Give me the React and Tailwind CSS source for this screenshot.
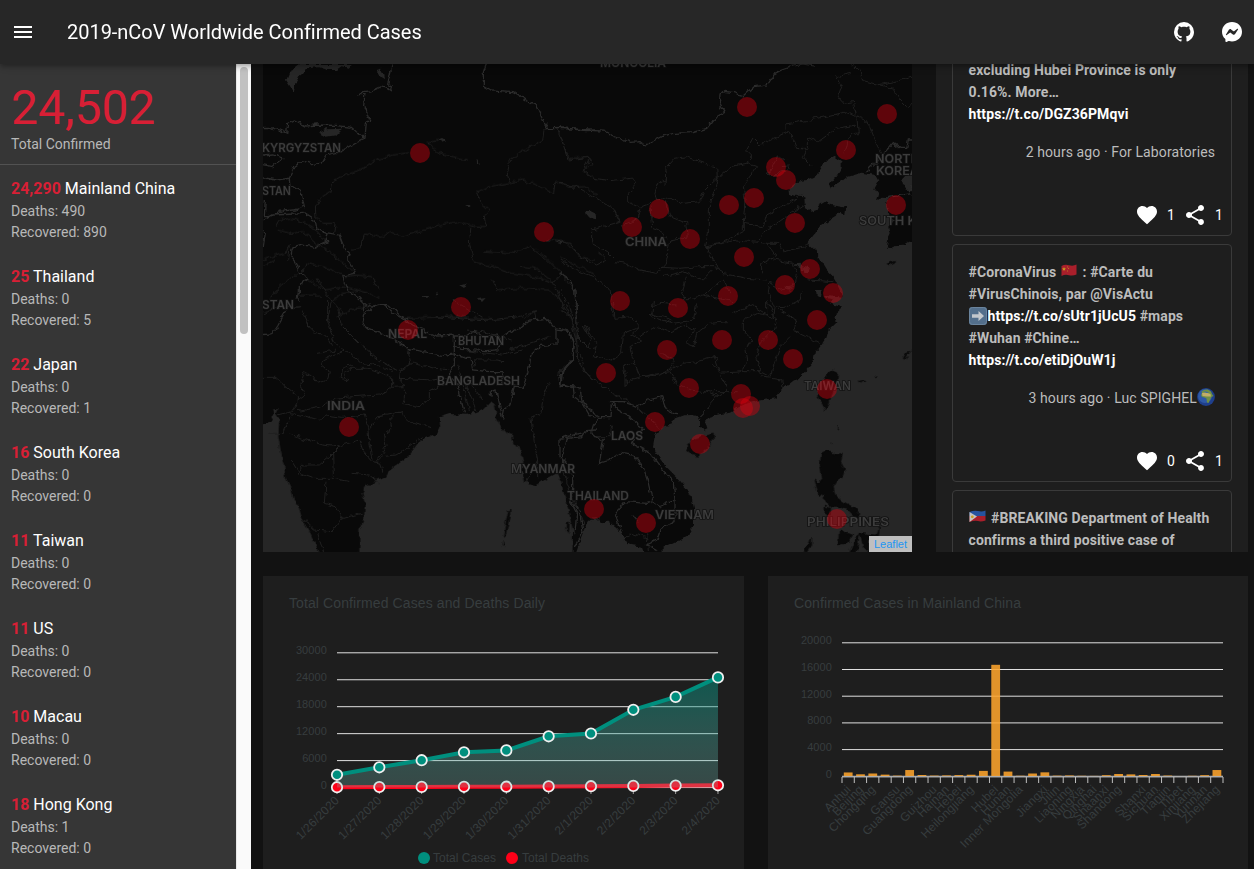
import { MdFavorite, MdMenu, MdShare } from "react-icons/md";

const regions = [
  { count: "24,290", name: "Mainland China", deaths: 490, recovered: 890 },
  { count: "25", name: "Thailand", deaths: 0, recovered: 5 },
  { count: "22", name: "Japan", deaths: 0, recovered: 1 },
  { count: "16", name: "South Korea", deaths: 0, recovered: 0 },
  { count: "11", name: "Taiwan", deaths: 0, recovered: 0 },
  { count: "11", name: "US", deaths: 0, recovered: 0 },
  { count: "10", name: "Macau", deaths: 0, recovered: 0 },
  { count: "18", name: "Hong Kong", deaths: 1, recovered: 0 },
];

const markers = [
  [420, 153], [544, 232], [461, 307], [408, 330], [349, 427], [747, 107], [887, 114], [846, 150],
  [776, 167], [786, 180], [754, 198], [729, 205], [659, 209], [632, 227], [690, 239], [795, 223],
  [896, 205], [744, 257], [810, 269], [785, 285], [833, 293], [728, 296], [678, 308], [620, 301],
  [817, 320], [722, 340], [768, 340], [667, 350], [793, 359], [606, 373], [689, 388], [741, 394],
  [743, 408], [750, 406], [827, 389], [655, 422], [700, 444], [594, 509], [646, 523], [837, 519],
];

// Map labels: text, left, baseline, width
const labels = [
  ["MONGOLIA", 600, 67, 66], ["KYRGYZSTAN", 262, 151.5, 79], ["STAN", 262, 194.5, 29], ["STAN", 262, 309, 32],
  ["CHINA", 625, 246, 42], ["NEPAL", 388, 337.5, 39], ["BHUTAN", 458, 345, 46], ["BANGLADESH", 437, 384.5, 83],
  ["INDIA", 327, 410, 38], ["MYANMAR", 511, 472.5, 64], ["THAILAND", 567, 499.5, 62], ["LAOS", 611, 439.5, 32],
  ["VIETNAM", 655, 518.5, 59], ["TAIWAN", 804, 390, 47], ["PHILIPPINES", 807, 525.5, 82],
  ["NORTH", 875, 163, 45], ["KOREA", 876, 174.5, 43], ["SOUTH KOREA", 859, 224.5, 92],
];

// Every map sheet is drawn at three units per pixel from its own origin.
const sheets = {
  nw: "translate(236 60) scale(.33333)",
  ne: "translate(560 60) scale(.33333)",
  sw: "translate(236 300) scale(.33333)",
  se: "translate(560 300) scale(.33333)",
};

const water = {
  nw: [
    "M150,60 L160,35 175,28 195,12 350,12 340,25 318,18 300,30 275,30 250,22 215,25 200,40 190,48 178,70 173,96 160,75Z",
    "M422,30 L435,26 445,45 447,60 430,50Z",
    "M246,218 L270,208 318,206 300,226 270,230Z",
    "M605,238 L615,234 628,241 612,246Z M1046,452 L1062,454 1080,462 1080,478 1058,470Z M725,293 L728,296 731,320 726,310Z M686,435 L704,435 700,439Z M668,674 L685,670 694,676 684,684Z M726,715 L752,711 738,726Z M557,708 L578,708 570,714Z M596,710 L606,694 603,704Z M474,683 L488,687Z M955,545 L985,545 970,551Z M748,518 L762,520Z",
  ],
  ne: [
    "M75,458 L90,452 112,464 104,476 90,472Z",
    "M1086,1506 L1086,540 1045,545 1030,554 1005,556 998,565 980,566 985,535 992,520 988,500 998,485 985,450 978,430 990,412 965,410 948,425 955,400 944,385 955,365 944,345 905,338 860,352 838,370 810,383 808,376 825,355 845,325 845,305 820,288 803,298 785,320 770,345 740,360 710,366 688,385 690,402 715,410 733,412 735,445 755,455 770,450 775,438 795,425 815,435 858,443 856,465 835,461 805,480 780,498 765,520 742,550 765,570 782,600 800,630 820,650 840,685 845,710 800,705 790,712 820,718 812,730 842,742 840,755 820,772 832,785 805,812 798,838 780,865 765,880 760,905 735,935 715,955 700,962 665,990 645,1015 595,1022 560,1030 530,1045 510,1058 480,1062 450,1070 436,1088 442,1108 432,1112 420,1100 420,1080 414,1068 395,1065 370,1066 345,1075 335,1092 310,1100 285,1125 279,1158 295,1190 320,1222 355,1256 380,1286 395,1315 402,1345 402,1395 385,1425 350,1445 315,1462 300,1476 300,1506Z",
    "M1086,342 L1035,348 1024,360 1026,378 1048,392 1086,398Z",
    "M38,1506 L48,1476 64,1430 74,1405 82,1385 92,1376 118,1375 122,1387 145,1385 165,1400 185,1422 194,1442 215,1455 245,1460 262,1506Z",
    "M768,690 L782,690 780,710 770,705Z M705,610 L722,608 730,630 715,622Z M727,618 L748,624 742,640 730,636Z M676,676 L692,682 684,690Z M213,1364 L225,1370 240,1390 228,1382Z",
    "M0,1300 L8,1330 18,1360 30,1400 36,1445 35,1506 0,1506Z",
  ],
  sw: [
    "M50,380 L81,373 104,362 112,344 108,325 125,325 118,340 130,360 127,408 134,450 145,500 150,535 165,565 172,590 188,620 200,660 222,700 238,735 247,756 258,786 50,786Z",
    "M370,786 L370,690 384,660 386,610 379,580 384,560 395,553 410,554 418,540 450,530 460,512 495,485 520,465 545,430 565,415 600,403 612,385 610,352 640,342 690,344 720,335 745,325 765,303 778,320 782,355 800,385 815,402 828,405 832,430 852,440 862,485 860,515 864,545 885,552 902,556 925,540 962,520 976,545 985,590 1000,640 1010,690 1008,786Z",
  ],
};

const islands = [
  "M820,210 L833,215 832,240 815,285 797,332 782,305 773,285 785,250 800,225Z",
  "M382,435 L395,420 430,408 460,402 460,415 445,440 418,466 392,460 381,450Z",
  "M785,462 L800,454 830,463 847,459 842,485 854,510 845,535 832,542 820,562 825,585 850,605 880,622 900,645 890,655 865,630 838,622 815,622 795,605 790,585 772,580 762,540 775,550 788,535 780,495Z",
  "M795,618 L812,625 810,648 795,640Z M838,690 L878,705 862,730 835,738Z M870,755 L885,715 898,705 890,755Z M905,715 L925,720 925,755 910,740Z M900,655 L925,658 915,668Z M895,700 L950,705 958,680 955,715 910,722Z M730,752 L748,730 755,712 755,735 740,756Z",
  "M1030,175 L1038,160 1053,150 1040,164 1033,178Z M980,-108 L1003,-116 1003,-110 985,-102Z M895,244 L915,240 900,246Z M945,230 L954,227Z",
  "M-156,635 L-150,633 -154,660 -165,710 -170,712Z M-172,725 L-168,738 -174,738Z",
  "M22,670 L28,665 26,700 20,690Z M832,376 L836,388Z M812,430 L820,426Z",
];

// National frontiers
const frontiers = {
  nw: [
    "M472,0 L462,45 455,70 466,78 464,92 450,84 436,80 410,92 380,95 370,104 390,104 386,140 402,182 388,190 384,235",
    "M60,203 L100,202 130,210 152,220 155,190 175,180 210,198 240,195 300,196 345,202 382,232",
    "M384,235 L345,258 315,275 270,285 255,310 230,314 200,302 175,320 160,352 162,375 195,395 205,440 175,450 145,452 100,470 85,470 88,420",
    "M60,495 L110,465 180,462 205,460 235,480 240,505 270,518 310,525 325,565 342,580 335,600 358,640 320,648 325,665 335,690 380,725 405,745 430,732 460,735 490,765 520,780",
    "M270,518 L275,545 240,562 200,555 168,565 165,590 180,610 190,640 215,655 190,675 190,700 185,725",
    "M60,310 L110,320 140,294 110,285 60,290 M60,350 L120,360 160,355",
    "M755,0 L742,40 742,80 765,93 832,98 865,118 900,135 918,175 936,206 1000,205 1050,212 1080,210",
    "M60,490 L88,520 82,560",
  ],
  ne: [
    "M0,204 L80,210 140,214 160,228 210,247 240,245 256,257 310,228 345,220 400,218 440,205 465,175 494,157 478,130 480,105 492,94 520,98 550,107 580,80 622,75 645,40 665,30 700,18 730,12 765,18",
    "M918,335 L945,310 985,265 1000,248 1020,262 1040,262 1045,240 1076,240",
    "M985,412 L1030,405 1050,402 1056,375",
    "M0,640 L30,660 45,695 52,780",
  ],
  sw: [
    "M60,108 L105,105 125,75 150,30 M380,0 L385,20 385,50 380,72 400,88 470,115 515,145 560,155 620,166 655,162 655,105 600,108 530,75 500,55 470,40 440,12 410,18 388,40 378,70",
    "M655,135 L675,148 750,152 785,150 800,120 780,105 740,110 715,90 690,108 655,108",
    "M800,108 L850,85 880,60 930,55 960,90 1000,95 1010,130 1010,180 980,215 975,255 1012,262 1015,290 1040,310 1060,345 1080,352",
    "M960,90 L960,135 910,140 885,165 880,200 862,262 835,258 820,320 805,330 800,355 780,270 760,280 770,292",
    "M655,162 L690,175 705,175 710,210 760,215 805,215 800,250 M655,162 L655,195 640,225 665,250 670,275 685,340",
    "M1080,390 L1050,392 1040,410 990,415 980,460 980,500 1010,530 1010,570 1000,595 1030,635 1040,690 1015,745",
  ],
  se: [
    "M0,85 L30,95 40,130 35,180 5,215 0,262 M0,258 L60,262 65,300 90,330 120,350 150,350 155,305 190,305 230,318 265,300 305,290 320,330 350,345",
    "M95,392 L0,415 0,470 38,510 M95,392 L100,375 125,350 M95,395 L105,412 130,418 118,490 150,480 180,460 220,465 250,505 265,550 278,605 265,610 195,605 165,640 180,690 195,720",
    "M150,305 L175,330 200,345 250,385 240,405 215,430 270,460 300,500 340,550 345,600 345,665 300,690 290,720 260,735 290,752",
    "M278,605 L300,620 345,600 M45,700 L50,640 30,600",
  ],
};

// Provinces and rivers
const provinces = {
  nw: [
    "M240,470 L238,440 250,418 285,395 290,365 330,345 370,330 420,300 470,285 520,278 M590,265 L620,285 660,292 695,300 M590,262 L575,250 605,240",
    "M240,470 L265,490 298,490 292,520 M345,570 L372,565 385,522 440,532 460,515 500,528 560,512 610,495 665,485 720,498 752,500 745,470 762,455 735,430 722,398 760,380 860,360 900,372 953,400 957,365 1000,382 1050,380 1080,405",
    "M820,365 L812,335 818,308 850,280 920,240 924,210 936,206 M965,206 L985,260 1000,295 1060,290 1068,310 1040,335 1080,357",
    "M705,500 L700,545 712,605 770,620 830,640 900,650 950,670 975,640 930,595 880,555 840,580 745,573 M770,660 L785,692 850,685 940,690 975,720 1005,780 M855,618 L900,625 950,665 985,750",
    "M975,640 L1015,690 1025,780 M930,540 L990,545 1030,590 1080,600 M970,590 L1040,625 1080,645",
    "M120,500 L130,480 165,475 200,485 240,510 270,545 M125,510 L165,520 200,515 250,555 300,590 350,635 M60,605 L110,590 150,580 160,550 155,600 M60,625 L120,600",
    "M185,640 L130,680 100,720 M200,640 L210,610 260,620 290,630 330,650 360,645 410,650 430,690 M215,655 L260,690 330,680 400,700 430,715 M190,705 L255,705 M60,765 L110,745 195,740 M240,655 L270,700 320,760 M275,780 L285,730 320,700 370,690 M300,770 L360,745 400,742",
    "M510,775 L640,770 780,780 M860,780 L895,755 900,780",
  ],
  ne: [
    "M0,225 L25,300 90,292 70,330 100,355 150,362 215,355 230,370 205,400 205,425 240,442 270,430 M0,370 L50,380 110,415 160,445 180,485 130,500 95,510 95,550 140,575 165,600 M315,375 L318,325 345,295 380,290 470,322 472,355 450,375 430,395 418,425 370,430 315,410 290,420 285,400 295,370 315,360",
    "M475,350 L460,400 445,450 445,520 437,558 460,600 485,640 560,655 620,660 M475,350 L510,320 560,310 575,285 560,270 580,235 600,255 640,235 690,212 710,265 740,268 730,290 755,320 M675,212 L675,192 740,182 860,155 890,170 895,220 865,235 855,280 M710,265 L745,265 745,230 775,245 830,205 885,195",
    "M560,310 L590,320 550,380 555,420 550,490 550,515 490,545 437,558 M550,490 L610,500 M610,500 L620,465 700,420 730,400 M590,545 L620,510 735,430 M437,560 L530,540 620,550 660,550 670,575 735,560 745,550 M620,550 L650,590 605,610 605,640",
    "M640,315 L625,345 640,350 660,330 680,335 M640,315 L655,285 665,300 682,298 M665,320 L690,318 680,335",
    "M875,12 L900,35 910,65 950,75 1000,65 1076,48 M875,40 L830,50 845,80 835,110 850,130 880,125 890,170 910,175 930,200 945,240 965,280 M960,75 L1000,85 1020,120 1040,140 1076,118",
    "M240,442 L230,480 180,500 M315,420 L330,470 380,490 385,530 330,540 315,610 290,640 240,630 200,610 165,605 M270,440 L275,500 300,510 320,540 M0,545 L30,550 60,590 110,615 140,600 115,575",
    "M305,622 L360,625 420,620 465,620 490,640 M310,650 L370,635 430,660 460,630 M380,650 L365,700 380,720 430,705 520,725 M430,705 L490,660 510,700 M280,740 L300,730 350,735 M270,760 L340,780 M520,760 L580,730 590,745 640,775 M640,600 L700,610 710,640 700,680 650,690 630,660 625,700 645,745 640,780 M730,690 L720,720 680,740 650,745 M745,660 L820,665",
    "M0,600 L45,630 100,650 150,690 160,770 M0,690 L30,740 40,780",
  ],
  sw: [
    "M60,232 L120,232 150,262 185,290 182,310 170,335 125,345 M180,335 L250,322 300,295 350,290 430,285 470,262 470,235 430,215 395,205 340,205 325,220 338,240 315,235 320,205 345,195 M185,300 L205,285 195,250 205,220 230,230 245,250 275,240 280,215 255,195 262,180 300,160 330,150",
    "M275,0 L275,60 295,130 340,160 375,190 440,200 470,215 M305,30 L320,80 370,130 430,180 490,215 530,190 600,205 640,210 M515,145 L525,190 495,205 490,235 510,280 500,310 550,320 580,300 580,275 640,245 M490,235 L590,240 650,230 M470,262 L500,260",
    "M155,340 L195,345 250,360 270,345 320,352 385,345 395,380 400,440 410,480 M160,402 L200,415 260,435 305,440 370,420 380,450 410,485 435,490 440,515 M185,525 L200,495 250,495 280,470 310,440 290,460 292,530 M165,480 L190,520 230,535 290,535 340,545 M350,520 L400,525 430,550",
    "M425,485 L440,470 480,465 520,440 560,410 M420,485 L450,440 445,400 465,385 460,360 480,340 500,335 505,350 M395,390 L430,350 500,335 M505,350 L520,365 590,380 M270,545 L265,610 300,620 320,655 380,640 M200,655 L235,690 290,695 320,655 M245,700 L270,776",
    "M665,190 L680,250 700,330 M690,250 L720,330 M700,245 L740,300 M710,210 L720,180 780,180 805,185 M715,155 L800,165 860,150 M820,150 L940,110 M940,250 L920,300 915,340 885,355 895,430 905,480 870,550 M905,480 L905,540 M1010,180 L970,215 965,245 M985,0 L1020,100 1025,180 1060,230 1080,240 M1020,0 L1025,110 1060,145 1080,140",
    "M60,60 L110,25 200,20 M245,100 L270,105 290,140 M200,30 L220,80 245,105",
    "M600,50 L740,62 850,50 900,35 M690,90 L740,95 830,120 M650,0 L740,52",
    "M100,400 L140,400 150,375 165,350 M240,160 L300,150",
  ],
  se: [
    "M0,30 L30,50 50,130 M45,0 L55,150 80,220 150,275 200,300 240,330 300,385 M70,75 L95,120 80,145 M75,75 L110,130 100,170 155,180 185,160 190,100 240,80 215,50 165,55 160,0 M240,80 L215,105 245,120 210,140 215,165 240,230 300,225 325,210 370,190 410,185 465,170 480,215 M195,215 L195,260 210,240 245,230 M280,0 L275,50 340,70 400,60 410,10 M240,110 L280,80 330,95 380,75 405,90 380,130 405,140",
    "M400,140 L410,100 450,70 500,65 M550,60 L590,40 620,45 620,0 M550,60 L550,90 575,120 555,150 560,180 545,215 480,220 500,260 495,275 470,290 M660,30 L710,60 700,90 740,110 780,130 M620,0 L650,60 640,90 600,130 590,170 600,215 545,215 M600,215 L630,230 660,140 690,110 M600,230 L665,240 670,270",
    "M240,230 L330,215 350,250 390,270 430,275 475,285 440,325 420,345 M325,210 L345,180 300,160 M430,275 L530,275 M105,410 L150,410 155,380 M200,250 L190,200 225,190 M480,215 L460,190",
    "M5,500 L40,600 60,640 75,680 M190,720 L215,700 265,715 M260,700 L265,750",
  ],
};

function WorldMap() {
  return (
    <svg className="block h-[488px] w-[649px] overflow-hidden" viewBox="263 64 649 488">
      <defs>
        <filter id="rough" filterUnits="userSpaceOnUse" x="253" y="54" width="669" height="508" colorInterpolationFilters="sRGB">
          <feTurbulence type="fractalNoise" baseFrequency="0.16" numOctaves="2" seed="4" />
          <feDisplacementMap in="SourceGraphic" scale="6" xChannelSelector="R" yChannelSelector="G" />
        </filter>
      </defs>
      <rect x="263" y="64" width="649" height="488" fill="#090909" />
      <g filter="url(#rough)">
        {Object.keys(water).map((k) => (
          <path key={k} transform={sheets[k]} d={water[k].join(" ")} fill="#262626" />
        ))}
        <path transform={sheets.se} d={islands.join(" ")} fill="#090909" stroke="#090909" strokeWidth="2" />
        {Object.keys(provinces).map((k) => (
          <path key={k} transform={sheets[k]} d={provinces[k].join(" ")} fill="none" stroke="#202020" strokeWidth="3" />
        ))}
        {Object.keys(frontiers).map((k) => (
          <path key={k} transform={sheets[k]} d={frontiers[k].join(" ")} fill="none" stroke="#2c2c2c" strokeWidth="3.8" />
        ))}
      </g>
      <g className="font-['Inter',sans-serif] text-[12px] font-semibold" fill="#3c3c3c" stroke="#121212" strokeWidth="1.5" paintOrder="stroke">
        {labels.map(([text, x, y, w]) => (
          <text key={text + x + y} x={x} y={y} textLength={w} lengthAdjust="spacingAndGlyphs">{text}</text>
        ))}
      </g>
      {markers.map(([x, y]) => (
        <circle key={`${x}-${y}`} cx={x} cy={y} r="10" fill="#e20010" fillOpacity="0.4" />
      ))}
    </svg>
  );
}

const days = ["1/26/2020", "1/27/2020", "1/28/2020", "1/29/2020", "1/30/2020", "1/31/2020", "2/1/2020", "2/2/2020", "2/3/2020", "2/4/2020"];
const caseY = [774.8, 767.3, 760.2, 752.3, 750.4, 736.3, 733.5, 709.8, 696.9, 677.4];
const deathY = [787.2, 787, 786.9, 786.8, 786.7, 786.4, 786.2, 785.9, 785.6, 785.3];
const dayX = days.map((_, i) => 337 + i * 42.33);

function DailyChart() {
  const points = dayX.map((x, i) => `${x},${caseY[i]}`).join(" ");
  const deathPoints = dayX.map((x, i) => `${x},${deathY[i]}`).join(" ");
  return (
    <svg className="block h-[293px] w-[481px] font-['Liberation_Sans',sans-serif]" viewBox="263 576 481 293" fill="#373d3f">
      <defs>
        <linearGradient id="area" x1="0" y1="677" x2="0" y2="788" gradientUnits="userSpaceOnUse">
          <stop offset="0" stopColor="#008f7e" stopOpacity=".5" />
          <stop offset="1" stopColor="#80c7be" stopOpacity=".25" />
        </linearGradient>
      </defs>
      <text x="289" y="608" fontSize="14" textLength="256">Total Confirmed Cases and Deaths Daily</text>
      {[30000, 24000, 18000, 12000, 6000, 0].map((v, i) => (
        <g key={v}>
          <text x="327" y={654 + i * 27} fontSize="11" textAnchor="end" letterSpacing=".1">{v}</text>
          <path d={`M337,${652.8 + i * 26.95}H718`} stroke="#e0e0e0" strokeWidth="1" />
        </g>
      ))}
      {dayX.map((x, i) => (
        <g key={days[i]}>
          <path d={`M${x},788v6`} stroke="#a0a0a0" />
          <text transform={`translate(${x + 3} 801) rotate(-45)`} fontSize="12" textAnchor="end" letterSpacing=".25">{days[i]}</text>
        </g>
      ))}
      <polyline points={deathPoints} fill="none" stroke="#ff0018" strokeWidth="4" />
      {dayX.map((x, i) => (
        <circle key={x} cx={x} cy={deathY[i]} r="5.2" fill="#ff0018" stroke="#f0f0f0" strokeWidth="1.8" />
      ))}
      <polygon points={`337,787.5 ${points} 718,787.5`} fill="url(#area)" />
      <polyline points={points} fill="none" stroke="#008f7e" strokeWidth="4" />
      {dayX.map((x, i) => (
        <circle key={x} cx={x} cy={caseY[i]} r="5.2" fill="#008f7e" stroke="#f0f0f0" strokeWidth="1.8" />
      ))}
      <circle cx="424" cy="858" r="6" fill="#008f7e" />
      <text x="433" y="862" fontSize="12" textLength="63">Total Cases</text>
      <circle cx="512" cy="858" r="6" fill="#ff0018" />
      <text x="522" y="862" fontSize="12" textLength="67">Total Deaths</text>
    </svg>
  );
}

const provinceBars = [
  ["Anhui", 530], ["Beijing", 253], ["Chongqing", 376], ["", 205], ["Gansu", 57], ["Guangdong", 895], ["", 150],
  ["Guizhou", 64], ["Hainan", 89], ["Hebei", 135], ["Heilongjiang", 190], ["", 764], ["Hubei", 16678], ["Hunan", 661],
  ["Inner Mongolia", 42], ["", 373], ["Jiangxi", 548], ["Jilin", 54], ["Liaoning", 81], ["Ningxia", 34], ["Qinghai", 17],
  ["Shaanxi", 120], ["Shandong", 298], ["", 243], ["Shanxi", 150], ["Sichuan", 301], ["Tianjin", 67], ["Tibet", 1],
  ["Xinjiang", 32], ["Yunnan", 122], ["Zhejiang", 895],
];

function ProvinceChart() {
  const step = 381 / 31;
  return (
    <svg className="block h-[293px] w-[480px] font-['Liberation_Sans',sans-serif]" viewBox="768 576 480 293" fill="#373d3f">
      <text x="794" y="608" fontSize="14" textLength="227">Confirmed Cases in Mainland China</text>
      {[20000, 16000, 12000, 8000, 4000, 0].map((v, i) => (
        <g key={v}>
          <text x="832" y={644 + i * 26.8} fontSize="11" textAnchor="end" letterSpacing=".1">{v}</text>
          <path d={`M842,${642.8 + i * 26.7}H1223`} stroke="#e0e0e0" />
        </g>
      ))}
      <path d="M842,777H1223" stroke="#a0a0a0" />
      {provinceBars.map(([name, value], i) => (
        <g key={i}>
          <rect x={842 + step * i + 1.8} y={776 - value / 150} width="8.8" height={value / 150} fill="#ffa52d" fillOpacity=".87" />
          <text transform={`translate(${842 + step * (i + 0.5) + 3.5} 790) rotate(-45)`} fontSize="12" textAnchor="end" letterSpacing=".25">{name}</text>
        </g>
      ))}
      {Array.from({ length: 32 }, (_, i) => (
        <path key={i} d={`M${842 + step * i},777v6`} stroke="#c0c0c0" />
      ))}
    </svg>
  );
}

function ChinaFlag() {
  return (
    <svg className="mr-[2px] ml-px inline-block h-[13px] w-4 align-[0px]" viewBox="0 0 16 13">
      <path d="M.5 2Q4 0 8 1.2T15.5.6V10.4Q12 12.2 8 11.2T.5 12Z" fill="#a91f2b" />
      <path d="M3 3l.6 1.3 1.3.1-1 1 .3 1.3L3 6l-1.2.7.3-1.3-1-1 1.4-.1z" fill="#c49a20" />
      <path d="M6 2.5h1v1H6zM7 4h1v1H7zM6 6.5h1v1H6z" fill="#b67a20" />
    </svg>
  );
}

function PhilippinesFlag() {
  return (
    <svg className="mr-[2px] inline-block h-[13px] w-[17px] align-[0px]" viewBox="0 0 17 13">
      <path d="M.5 2Q5 0 9 1T16.5.5V6H.5Z" fill="#26539f" />
      <path d="M.5 6H16.5v4.5Q12 12 9 11T.5 12Z" fill="#a91f2b" />
      <path d="M.5 2L8 6.5.5 12Z" fill="#c4c4c4" />
      <circle cx="3.3" cy="6.8" r="1.4" fill="#c9a029" />
    </svg>
  );
}

function ArrowBadge() {
  return (
    <svg className="mr-px inline-block h-[18px] w-[18px] align-[-4px]" viewBox="0 0 18 18">
      <rect width="18" height="18" rx="3" fill="#536f8c" />
      <rect x=".5" y=".5" width="17" height="17" rx="3" fill="none" stroke="#6b849d" />
      <path d="M3 7.2h6.5V4l5.5 5-5.5 5v-3.200H3z" fill="#c3c8cd" />
    </svg>
  );
}

function Globe() {
  return (
    <svg className="inline-block h-[18px] w-[18px] align-[-3px]" viewBox="0 0 18 18">
      <circle cx="9" cy="9" r="8.9" fill="#1f3f8c" />
      <circle cx="8" cy="8" r="7" fill="#3565b0" opacity=".7" />
      <path d="M4.500 3.500Q7 1 11 1.500L14 3.500 15 6 16.500 8 14.500 9 13 12 11.500 15 10 14.500 9.500 10.500 7.500 9.500 5 9 4 7 5 5Z" fill="#6f8f45" />
      <path d="M5 5L9 4.500 13.500 6 14 8.500 9.500 8.500 5.500 8Z" fill="#c2ad68" />
      <path d="M6 3.700L9 3.500 12 4.700 10 5Z" fill="#3565b0" />
    </svg>
  );
}

function Tweet({ className = "", children, meta, likes, shares }) {
  return (
    <article className={`shrink-0 rounded border border-[#3a3a3a] pt-4 ${className}`}>
      <p className="px-[15.5px] text-sm leading-[22px] font-bold tracking-[0.11px] whitespace-nowrap text-[#bcbcbc]">{children}</p>
      <p className="mt-4 px-4 text-right text-sm leading-[22px] tracking-[0.1px] text-[#bcbcbc]">{meta}</p>
      <div className="mt-8 flex h-10 items-center justify-end pr-2 text-sm text-white">
        <MdFavorite size={24} />
        <span className="ml-2 w-[8px] text-center">{likes}</span>
        <MdShare size={24} className="ml-2" />
        <span className="ml-2 w-[8px] text-center">{shares}</span>
      </div>
    </article>
  );
}

const Link = ({ children }) => <a className="text-white">{children}</a>;

export default function App() {
  return (
    <div className="flex h-[869px] w-[1254px] flex-col overflow-hidden bg-[#121212] font-['Roboto',sans-serif] text-white">
      <header className="relative z-10 flex h-16 shrink-0 items-center bg-[#272727] pr-2.5 pl-[11px] shadow-[0_2px_4px_-1px_rgba(0,0,0,.2),0_4px_5px_rgba(0,0,0,.14),0_1px_10px_rgba(0,0,0,.12)]">
        <MdMenu size={24} />
        <h1 className="ml-8 text-xl tracking-[-0.03px]">2019-nCoV Worldwide Confirmed Cases</h1>
        <div className="ml-auto flex gap-6">
          <svg width="24" height="24" viewBox="0 0 24 24" fill="currentColor">
            <path d="M12,2A10,10 0 0,0 2,12C2,16.42 4.87,20.17 8.84,21.5C9.34,21.58 9.5,21.27 9.5,21C9.5,20.77 9.5,20.14 9.5,19.31C6.73,19.91 6.14,17.97 6.14,17.97C5.68,16.81 5.03,16.5 5.03,16.5C4.12,15.88 5.1,15.9 5.1,15.9C6.1,15.97 6.63,16.93 6.63,16.93C7.5,18.45 8.97,18 9.54,17.76C9.63,17.11 9.89,16.67 10.17,16.42C7.95,16.17 5.62,15.31 5.62,11.5C5.62,10.39 6,9.5 6.65,8.79C6.55,8.54 6.2,7.5 6.75,6.15C6.75,6.15 7.59,5.88 9.5,7.17C10.29,6.95 11.15,6.84 12,6.84C12.85,6.84 13.71,6.95 14.5,7.17C16.41,5.88 17.25,6.15 17.25,6.15C17.8,7.5 17.45,8.54 17.35,8.79C18,9.5 18.38,10.39 18.38,11.5C18.38,15.32 16.04,16.16 13.81,16.41C14.17,16.72 14.5,17.33 14.5,18.26C14.5,19.6 14.5,20.68 14.5,21C14.5,21.27 14.66,21.59 15.17,21.5C19.14,20.16 22,16.42 22,12A10,10 0 0,0 12,2Z" />
          </svg>
          <svg width="24" height="24" viewBox="0 0 24 24">
            <path d="M12 2C6.4 2 2 6.1 2 11.7c0 2.900 1.200 5.400 3.100 7.100.2.2.3.4.3.6v1.800c0 .6.6 1 1.100.7l2-.9c.2-.1.3-.1.5 0 .9.3 1.900.4 3 .4 5.600 0 10-4.100 10-9.700S17.600 2 12 2Z" fill="#fff" />
            <path d="M6 14.500l2.900-4.700c.5-.7 1.500-.9 2.200-.4l2.300 1.800c.2.1.5.1.7 0l3.200-2.400c.4-.3 1 .2.7.6l-2.900 4.700c-.5.7-1.500.9-2.200.4l-2.300-1.800a.6.6 0 0 0-.7 0l-3.200 2.400c-.4.3-1-.2-.7-.6Z" fill="#272727" />
          </svg>
        </div>
      </header>

      <div className="flex min-h-0 flex-1">
        <aside className="w-[236px] shrink-0 overflow-hidden bg-[#363636]">
          <div className="h-[101px] border-b border-[#525252] pt-5 pl-[11px]">
            <div className="text-5xl leading-[48px] text-[#d81f35]">24,502</div>
            <div className="mt-0.5 text-sm leading-5 text-[#b8b8b8]">Total Confirmed</div>
          </div>
          <ul>
            {regions.map((r) => (
              <li key={r.name} className="h-[88px] pt-3 pl-[11px]">
                <div className="text-base leading-6"><b className="text-[#d81f35]">{r.count}</b> {r.name}</div>
                <div className="text-sm leading-[21px] text-[#b8b8b8]">Deaths: {r.deaths}</div>
                <div className="text-sm leading-[21px] text-[#b8b8b8]">Recovered: {r.recovered}</div>
              </li>
            ))}
          </ul>
        </aside>
        <div className="w-[15px] shrink-0 border-l border-[#e8e8e8] bg-[#fafafa] pt-[3px] pl-[3px]">
          <div className="h-[267px] w-2 rounded-full bg-[#c1c1c1]" />
        </div>

        <main className="flex min-w-0 flex-1 flex-col gap-6 pr-1.5 pl-3">
          <div className="flex h-[488px] shrink-0 gap-6">
            <section className="relative w-[649px] shrink-0 overflow-hidden">
              <WorldMap />
              <a className="absolute right-0 bottom-0 h-4 w-[43px] bg-[#bfbfbf] text-center font-['Liberation_Sans',sans-serif] text-[11px] leading-4 text-[#2196f3]">Leaflet</a>
            </section>
            <section className="flex w-[312px] flex-col gap-2 overflow-hidden bg-[#1e1e1e] px-4">
              <Tweet className="-mt-[22px]" meta="2 hours ago · For Laboratories" likes={1} shares={1}>
                excluding Hubei Province is only<br />0.16%. More…<br /><Link>https://t.co/DGZ36PMqvi</Link>
              </Tweet>
              <Tweet meta={<>3 hours ago · Luc SPIGHEL<Globe /></>} likes={0} shares={1}>
                #CoronaVirus <ChinaFlag /> : #Carte du<br />#VirusChinois, par @VisActu<br />
                <ArrowBadge /><Link>https://t.co/sUtr1jUcU5</Link> #maps<br />#Wuhan #Chine…<br /><Link>https://t.co/etiDjOuW1j</Link>
              </Tweet>
              <Tweet meta="3 hours ago" likes={0} shares={0}>
                <PhilippinesFlag /> #BREAKING Department of Health<br />confirms a third positive case of
              </Tweet>
            </section>
          </div>
          <div className="flex flex-1 gap-6">
            <section className="w-[481px] bg-[#1e1e1e]"><DailyChart /></section>
            <section className="w-[480px] bg-[#1e1e1e]"><ProvinceChart /></section>
          </div>
        </main>
      </div>
    </div>
  );
}
